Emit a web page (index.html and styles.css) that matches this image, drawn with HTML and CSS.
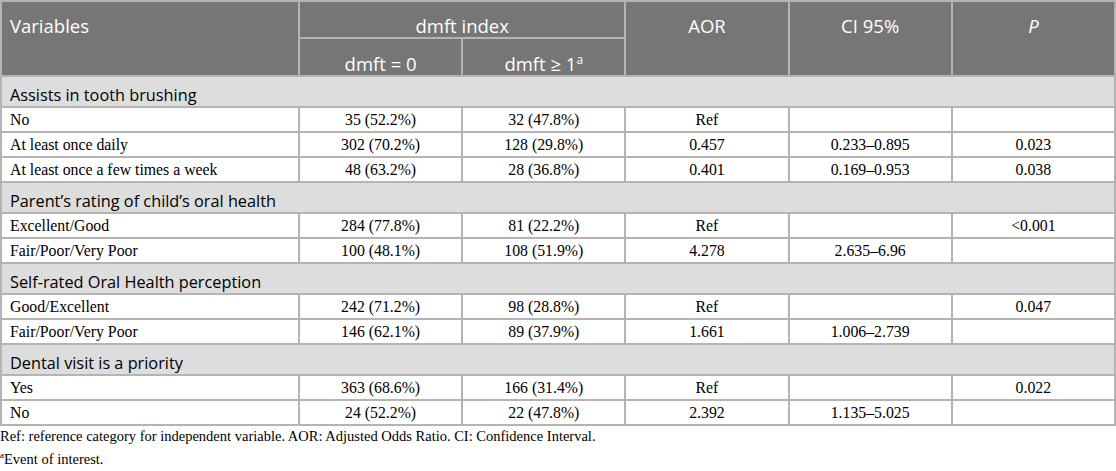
FILE: index.html
```html
<!DOCTYPE html>
<html lang="en">
<head>
    <meta charset="UTF-8">
    <title>dmft index table</title>
    <link rel="stylesheet" href="styles.css">
</head>
<body>
    <table class="data-table">
        <colgroup>
            <col class="col-var">
            <col class="col-num">
            <col class="col-num">
            <col class="col-num">
            <col class="col-num">
            <col class="col-num">
        </colgroup>
        <thead>
            <tr>
                <th rowspan="2" class="left">Variables</th>
                <th colspan="2">dmft index</th>
                <th rowspan="2">AOR</th>
                <th rowspan="2">CI 95%</th>
                <th rowspan="2"><i>P</i></th>
            </tr>
            <tr class="sub">
                <th>dmft = 0</th>
                <th>dmft &ge; 1<sup>a</sup></th>
            </tr>
        </thead>
        <tbody>
            <tr class="group"><td colspan="6">Assists in tooth brushing</td></tr>
            <tr><td>No</td><td>35 (52.2%)</td><td>32 (47.8%)</td><td>Ref</td><td></td><td></td></tr>
            <tr><td>At least once daily</td><td>302 (70.2%)</td><td>128 (29.8%)</td><td>0.457</td><td>0.233–0.895</td><td>0.023</td></tr>
            <tr><td>At least once a few times a week</td><td>48 (63.2%)</td><td>28 (36.8%)</td><td>0.401</td><td>0.169–0.953</td><td>0.038</td></tr>

            <tr class="group"><td colspan="6">Parent’s rating of child’s oral health</td></tr>
            <tr><td>Excellent/Good</td><td>284 (77.8%)</td><td>81 (22.2%)</td><td>Ref</td><td></td><td>&lt;0.001</td></tr>
            <tr><td>Fair/Poor/Very Poor</td><td>100 (48.1%)</td><td>108 (51.9%)</td><td>4.278</td><td>2.635–6.96</td><td></td></tr>

            <tr class="group"><td colspan="6">Self-rated Oral Health perception</td></tr>
            <tr><td>Good/Excellent</td><td>242 (71.2%)</td><td>98 (28.8%)</td><td>Ref</td><td></td><td>0.047</td></tr>
            <tr><td>Fair/Poor/Very Poor</td><td>146 (62.1%)</td><td>89 (37.9%)</td><td>1.661</td><td>1.006–2.739</td><td></td></tr>

            <tr class="group"><td colspan="6">Dental visit is a priority</td></tr>
            <tr><td>Yes</td><td>363 (68.6%)</td><td>166 (31.4%)</td><td>Ref</td><td></td><td>0.022</td></tr>
            <tr><td>No</td><td>24 (52.2%)</td><td>22 (47.8%)</td><td>2.392</td><td>1.135–5.025</td><td></td></tr>
        </tbody>
    </table>

    <div class="notes">
        <p>Ref: reference category for independent variable. AOR: Adjusted Odds Ratio. CI: Confidence Interval.</p>
        <p><sup>a</sup>Event of interest.</p>
    </div>
</body>
</html>
```

FILE: styles.css
```css
body {
    margin: 0;
    background-color: #ffffff;
    color: #000000;
}
.data-table {
    width: 1116px;
    border-collapse: collapse;
    table-layout: fixed;
    font-family: "Liberation Serif", "Times New Roman", serif;
    font-size: 15.8px;
}
.col-var {
    width: 298px;
}
.data-table th,
.data-table td {
    border: 2px solid #b4b4b4;
}
.data-table th {
    background-color: #767676;
    color: #ffffff;
    font-family: "Open Sans", "Noto Sans", sans-serif;
    font-weight: normal;
    font-size: 18.5px;
    line-height: 20px;
    text-align: center;
    vertical-align: top;
    padding: 14px 8px 1px;
}
.data-table th.left {
    text-align: left;
}
.data-table .sub th {
    padding-top: 15px;
}
.data-table th sup {
    font-size: 12px;
    line-height: 0;
}
.data-table td {
    text-align: center;
    line-height: 19px;
    padding: 2px 8px 2px;
}
.data-table td:first-child {
    text-align: left;
}
.data-table .group td {
    background-color: #dddddd;
    font-family: "Open Sans", "Noto Sans", sans-serif;
    font-size: 16.3px;
    line-height: 20px;
    padding: 8px 8px 1px;
}
.notes {
    font-family: "Liberation Serif", "Times New Roman", serif;
    font-size: 14.5px;
    padding: 1px 0 0;
}
.notes p {
    margin: 0;
    line-height: 19px;
}
.notes sup {
    font-size: 9px;
}
```
